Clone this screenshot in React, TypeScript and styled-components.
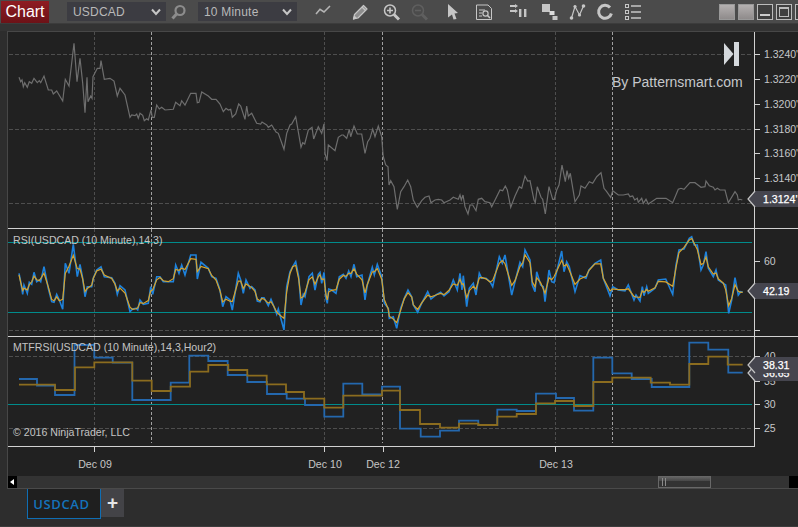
import styled, {createGlobalStyle} from 'styled-components'
import type {ReactNode} from 'react'

type Pt = [number, number]

const GlobalStyle = createGlobalStyle`
    html, body {
        margin: 0;
        padding: 0;
        background: #2d2d2d;
        overflow: hidden;
    }
`

const Page = styled.div`
    width: 798px;
    height: 527px;
    overflow: hidden;
    display: flex;
    flex-direction: column;
    background: #2d2d2d;
    font-family: "Liberation Sans", Arial, sans-serif;
`

const Toolbar = styled.div`
    height: 24px;
    flex: none;
    display: flex;
    align-items: center;
    padding-left: 1px;
    background: #4b4b4b;
    border-bottom: 1px solid #3c3c3c;
    box-sizing: border-box;
`

const Band = styled.div`
    height: 7px;
    flex: none;
    background: #333;
`

const ChartButton = styled.div`
    width: 48px;
    height: 22px;
    flex: none;
    display: flex;
    align-items: center;
    justify-content: center;
    background: linear-gradient(#8f1c22, #6d1217);
    color: #fff;
    font-size: 16px;
`

const Picker = styled.div<{$left: number}>`
    width: 99px;
    height: 19px;
    flex: none;
    margin-left: ${({$left}) => $left}px;
    padding: 0 5px 0 6px;
    box-sizing: border-box;
    display: flex;
    align-items: center;
    justify-content: space-between;
    background: #3c3c42;
    color: #b9b9b9;
    font-size: 12px;
    letter-spacing: 0.2px;
`

const Slot = styled.span<{$left: number}>`
    width: 16px;
    height: 16px;
    flex: none;
    display: block;
    margin-left: ${({$left}) => $left}px;

    svg {
        display: block;
        overflow: visible;
    }
`

const WindowButton = styled.span<{$filled?: boolean; $left?: number}>`
    width: 16px;
    height: 16px;
    flex: none;
    box-sizing: border-box;
    margin-left: ${({$left}) => $left ?? 3}px;
    display: flex;
    align-items: center;
    justify-content: center;
    border: 1px solid ${({$filled}) => ($filled ? '#999' : '#bbb')};
    background: ${({$filled}) => ($filled ? 'linear-gradient(#b4b0b0, #8f8b8b)' : '#3f3f3f')};
`

const MinimizeMark = styled.span`
    width: 10px;
    height: 2px;
    margin-top: 7px;
    background: #ccc;
`

const MaximizeMark = styled.span`
    width: 10px;
    height: 10px;
    box-sizing: border-box;
    border: 1px solid #bbb;
    border-top-width: 2px;
`

const Main = styled.div`
    margin-left: 7px;
    flex: none;
    border-left: 1px solid #474747;
    border-top: 1px solid #474747;
    background: #212121;
`

const Pane = styled.div<{$rule?: boolean}>`
    box-sizing: border-box;
    border-bottom: ${({$rule}) => ($rule ? '1px solid #d2d2d2' : 'none')};

    svg {
        display: block;
    }
`

const AxisText = styled.text`
    font-size: 10.5px;
    fill: #c6c8ca;
`

const TitleText = styled.text`
    font-size: 10.6px;
    fill: #c4c4c4;
`

const BrandText = styled.text`
    font-size: 14px;
    fill: #c6c8cc;
`

const DateText = styled.text`
    font-size: 10.6px;
    fill: #c6c6c6;
    text-anchor: middle;
`

const CalloutText = styled.text`
    font-size: 10.6px;
    fill: #fff;
    stroke: #fff;
    stroke-width: 0.25px;
`

const ScrollBar = styled.div`
    height: 13px;
    box-sizing: border-box;
    display: flex;
    align-items: stretch;
    background: #333;
    border-bottom: 1px solid #4a4a4a;
`

const ScrollEnd = styled.div`
    width: 10px;
    display: flex;
    align-items: center;
    justify-content: center;
    background: #000;
`

const ScrollArrow = styled.span`
    width: 0;
    height: 0;
    border-top: 3px solid transparent;
    border-bottom: 3px solid transparent;
    border-right: 4px solid #fff;
`

const ScrollThumb = styled.div`
    width: 60px;
    margin-left: 641px;
    box-sizing: border-box;
    padding-left: 3px;
    display: flex;
    gap: 2px;
    border: 1px solid #686868;
    border-top: none;
    background: linear-gradient(#6a6a6a, #474747 45%, #333 50%);
`

const Grip = styled.span`
    width: 1px;
    height: 8px;
    margin-top: 2px;
    background: #8a8a8a;
`

const ScrollEndRight = styled(ScrollEnd)`
    margin-left: 78px;
`

const TabBar = styled.div`
    flex: 1;
    display: flex;
    align-items: flex-start;
    padding-left: 27px;
    border-bottom: 1px solid #3c3c3c;
`

const Tab = styled.div`
    width: 74px;
    height: 30px;
    box-sizing: border-box;
    padding-right: 5px;
    display: flex;
    align-items: center;
    justify-content: center;
    background: #1f1f1f;
    border: 1px solid #0f6eb4;
    border-top: none;
    color: #1473bb;
    font-family: "Open Sans", sans-serif;
    font-size: 13px;
    font-weight: 600;
    letter-spacing: 0.6px;
`

const AddTab = styled.div`
    width: 23px;
    height: 28px;
    display: flex;
    align-items: center;
    justify-content: center;
    background: #434347;
    color: #e6e6e6;
    font-size: 19px;
    font-weight: 700;
`

const fromZoom = (raw: number[], ox: number, oy: number): Pt[] => {
    const out: Pt[] = []
    for (let i = 0; i < raw.length; i += 2) out.push([ox + raw[i] / 3, oy + raw[i + 1] / 3])
    return out
}

const toPoints = (pts: Pt[]) => pts.map(([x, y]) => `${x.toFixed(1)},${y.toFixed(1)}`).join(' ')

const smooth = (pts: Pt[]): Pt[] =>
    pts.map(([x, y], i) => {
        const prev = pts[Math.max(0, i - 1)][1]
        const next = pts[Math.min(pts.length - 1, i + 1)][1]
        return [x, prev * 0.18 + y * 0.64 + next * 0.18] as Pt
    })

const steps = (startX: number, raw: Pt[]): Pt[] => {
    const out: Pt[] = []
    let x = startX
    for (const [end, y] of raw) {
        out.push([x, y], [end, y])
        x = end
    }
    return out
}

const PRICE: Pt[] = [
    ...fromZoom([57,142,62,155,66,150,70,170,74,158,82,172,88,155,95,160,102,145,112,158,118,152,122,158,132,138,145,180,155,180,160,192,170,183,188,213,196,148,207,168,222,40,231,155,240,85,248,160,255,248,261,142,264,215,272,198,276,205,279,140,292,115,300,115,303,92,313,148,330,145,342,153,352,198,360,175,375,195,390,262,395,255,405,257,410,252,415,265,420,250,428,256,433,272,440,266,445,270,453,240,457,262,463,262,470,225,478,237,485,232,495,240,520,238,527,217,540,227,545,212,555,225,572,190,588,190,592,218,597,217,605,186,625,198,635,208,648,208,660,222,670,245,678,235,685,240,692,238,697,262,707,252,716,222,722,228,735,268,740,228,745,258,755,250,770,280,782,282,786,276,800,285,805,292,815,285,828,306,835,310,852,358,860,310,870,285,875,282,887,260,903,352,908,338,914,342,925,300,936,292,941,327,955,290,965,310,972,282,975,370,981,392,985,345,1005,362,1015,322,1025,315,1030,315,1040,325,1048,298,1052,320,1062,288,1072,312,1085,312,1095,370,1103,335,1110,325,1118,297,1125,320,1135,288,1145,320,1150,385], 0, 30),
    ...fromZoom([10,110,17,135,24,140,27,195,32,182,42,200,52,268,62,215,72,200,83,180,92,200,100,240,112,262,125,242,135,232,147,228,153,248,165,240,175,238,185,240,192,248,210,240,220,232,235,238,240,225,244,240,249,225,255,260,264,282,270,255,278,255,288,272,295,238,305,235,315,245,330,248,335,260,360,210,368,212,376,198,382,210,392,262,405,228,418,200,425,205,435,168,443,183,450,182,462,240,466,248,472,200,483,232,488,238,496,282,507,200,518,238,523,238,530,210,537,195,546,135,556,185,561,152,566,175,571,160,585,245,598,225,603,198,615,205,628,185,638,190,650,170,663,158,672,205,680,215,692,232,698,212,715,225,730,225,745,222,750,230,758,228,764,240,772,235,775,247,785,235,790,250,798,238,805,252,815,245,830,235,858,235,878,248,895,208,903,205,912,208,930,188,945,188,950,192,963,202,975,200,978,183,988,197,1000,202,1005,210,1012,205,1020,210,1035,210,1045,248,1065,215,1072,225,1075,240,1080,238,1087,240], 380, 120),
]

const RSI: Pt[] = [
    ...fromZoom([57,145,62,170,68,208,72,180,82,205,88,172,95,178,102,142,110,170,118,165,122,170,132,125,145,190,155,230,162,232,170,208,178,225,188,253,196,115,207,145,220,58,232,155,240,118,248,160,255,215,262,185,275,185,280,160,290,135,303,125,313,155,335,158,345,175,352,208,360,182,375,195,390,260,398,252,408,250,413,255,420,225,430,238,445,235,452,185,458,208,470,155,480,155,490,170,505,170,520,170,527,120,537,145,545,120,555,150,572,90,588,90,592,162,603,112,625,130,635,155,648,160,660,195,668,245,678,215,690,225,697,255,715,145,722,165,730,205,738,165], 0, 225),
    ...fromZoom([0,160,5,155,15,165,22,198,30,200,35,188,42,188,55,212,63,193,72,215,80,238,85,222,102,285,110,155,120,110,128,95,137,80,146,125,153,210,160,178,165,185,177,125,187,115,195,165,205,118,210,112,215,145,222,112,228,190,232,205,236,162,245,165,258,175,268,125,280,118,288,130,296,108,303,125,312,88,320,125,336,120,345,195,352,150,367,97,373,120,382,88,395,125,403,205,415,220,418,250,430,245,440,280,452,220,463,190,474,165,485,185,490,210,503,232,515,205,533,170,543,192,560,178,572,172,582,183,597,170,610,135,622,165,630,115,636,165,640,122,650,215,658,160,670,145,678,180,688,115,695,130,708,130,720,140,728,155,748,65,757,85,765,60], 250, 235),
    ...fromZoom([35,180,45,140,60,82,68,95,75,45,90,75,97,150,105,170,110,110,122,150,130,155,135,200,147,105,155,140,162,143,185,48,192,110,200,80,208,95,225,170,240,122,258,130,267,105,285,85,302,75,310,130,330,182,338,155,355,165,375,168,385,150,402,195,408,180,420,198,427,155,432,182,440,155,445,175,465,160,475,135,497,132,518,178,528,90,537,45,552,42,568,10,575,5,583,30,592,30,603,105,610,90,618,50,625,100,640,125,648,105,655,135,670,145,677,150,686,235,695,195,705,128,715,180,722,170,728,172], 500, 235),
]

const MTF_BLUE = steps(19, [[37,379],[55,385.7],[74.5,395],[94.3,345],[112.7,357.7],[132.3,362.7],[170.7,400],[189.3,382.7],[208.3,355.7],[227.7,361],[247.3,375],[267,382],[286.7,394],[305,398.7],[324.3,405],[343.3,416.7],[362.3,383.7],[382,394.3],[400,386.7],[420.7,428.7],[440,436.7],[459,430.7],[478.3,420.7],[497.3,425],[516.7,409.7],[536,411],[556,393.7],[574,398],[593.3,410.7],[612.3,357.7],[631.7,373.3],[651.7,379],[689.3,387],[708.3,342.7],[728.3,349.7],[742.7,372.7]])

const MTF_GOLD = steps(19, [[55,384.7],[75,390],[94.3,367.3],[132.3,362.3],[151.7,380.7],[170.7,391],[190,386.7],[208.3,371.7],[228.3,365],[247.3,370],[266.7,375.7],[286,384.3],[304,392],[324.3,398.7],[343.3,407.7],[382,395.7],[400,390.7],[420,410],[440,424],[459,427.7],[478.3,423.7],[497.3,425],[516.7,416.7],[536,414],[555,403.3],[574,401],[593.3,406],[612.3,382],[650.7,377.7],[670,382.7],[689.3,384.7],[708.3,364],[727.7,356.7],[742.7,364.7]])

const SESSION_LINES = [
    {x: 94.5, color: '#4e4e4e'},
    {x: 151.5, color: '#a0a0a0'},
    {x: 324.5, color: '#4e4e4e'},
    {x: 382.5, color: '#a0a0a0'},
    {x: 555.5, color: '#4e4e4e'},
    {x: 612.5, color: '#a0a0a0'},
]

function VerticalGrid({top, bottom}: {top: number; bottom: number}) {
    return (
        <>
            {SESSION_LINES.map((l) => (
                <line key={l.x} x1={l.x} x2={l.x} y1={top} y2={bottom} stroke={l.color} strokeDasharray="3 2"/>
            ))}
        </>
    )
}

function HorizontalGrid({ys}: {ys: number[]}) {
    return (
        <>
            {ys.map((y) => (
                <line key={y} x1={9} x2={752} y1={y + 0.5} y2={y + 0.5} stroke="#4e4e4e" strokeDasharray="4 2"/>
            ))}
        </>
    )
}

function Teal({y}: {y: number}) {
    return <line x1={8} x2={752} y1={y + 0.5} y2={y + 0.5} stroke="#008b8b" strokeWidth={1.2}/>
}

function AxisLine({top, bottom}: {top: number; bottom: number}) {
    return <line x1={754.5} x2={754.5} y1={top} y2={bottom} stroke="#d2d2d2"/>
}

function Tick({y, label, x = 764}: {y: number; label?: string; x?: number}) {
    return (
        <>
            <line x1={755} x2={760} y1={y + 0.5} y2={y + 0.5} stroke="#d2d2d2"/>
            {label && <AxisText x={x} y={y + 4}>{label}</AxisText>}
        </>
    )
}

function Callout({y, label}: {y: number; label: string}) {
    return (
        <>
            <polygon points={`748,${y} 754,${y - 8} 798,${y - 8} 798,${y + 8} 754,${y + 8}`} fill="#45454e"/>
            <polyline
                points={`755,${y - 8} 748,${y} 755,${y + 8}`}
                fill="none"
                stroke="#c4c4c4"
                strokeWidth={1.2}
            />
            <CalloutText x={763} y={y + 4}>{label}</CalloutText>
        </>
    )
}

function ChartSvg({top, height, children}: {top: number; height: number; children: ReactNode}) {
    return (
        <svg width={790} height={height} viewBox={`8 ${top} 790 ${height}`}>
            {children}
        </svg>
    )
}

const ICON = '#c6c6c6'

const icons: {left: number; node: ReactNode}[] = [
    {
        left: 18,
        node: <polyline points="1,10 5,5.3 9,8 15,2" fill="none" stroke="#b4b4b4" strokeWidth={1.6}/>,
    },
    {
        left: 21,
        node: (
            <g stroke={ICON} strokeWidth={1.2} strokeLinejoin="round">
                <path d="M1.5 15 L2.5 10.5 L11.5 1.5 L15 5 L6 14 Z" fill="#8e8e8e"/>
                <path d="M10 3 L13.5 6.5" fill="none"/>
                <path d="M1.5 15 L2.5 12.5 L4 14 Z" fill={ICON}/>
            </g>
        ),
    },
    {
        left: 15,
        node: (
            <g fill="none" stroke={ICON}>
                <circle cx={7} cy={6.5} r={5.5} strokeWidth={1.5}/>
                <path d="M11 10.5 L16 15.5" strokeWidth={3}/>
                <path d="M7 3.5 V9.5 M4 6.5 H10" strokeWidth={1.6}/>
            </g>
        ),
    },
    {
        left: 12,
        node: (
            <g fill="none" stroke="#5f5f5f">
                <circle cx={7} cy={6.5} r={5.5} strokeWidth={1.5}/>
                <path d="M11 10.5 L16 15.5" strokeWidth={3}/>
                <path d="M4 6.5 H10" strokeWidth={1.6}/>
            </g>
        ),
    },
    {
        left: 18,
        node: <path d="M3 0 L13 9 L9.5 9.5 L11.5 15 L8.5 15.5 L7 10.5 L3 13.5 Z" fill={ICON}/>,
    },
    {
        left: 15,
        node: (
            <g fill="none" stroke={ICON}>
                <path d="M0.5 1 H12 L15.5 4.5 V15.5 H0.5 Z" strokeWidth={1}/>
                <path d="M3 6 H9 M3 9 H6 M3 12 H6" strokeWidth={1}/>
                <circle cx={9.5} cy={9.5} r={2.6} strokeWidth={1.2}/>
                <path d="M11.5 11.5 L14 14" strokeWidth={1.6}/>
            </g>
        ),
    },
    {
        left: 18,
        node: (
            <g fill={ICON}>
                <path d="M0 1 H5 V0 L8 2 L5 4 V3 H0 Z"/>
                <path d="M0 6 H5 V5 L8 7 L5 9 V8 H0 Z"/>
                <rect x={9} y={5} width={2.4} height={8}/>
                <rect x={14} y={5} width={2.4} height={8}/>
            </g>
        ),
    },
    {
        left: 15,
        node: (
            <g fill={ICON}>
                <rect x={1} y={0} width={8} height={8}/>
                <rect x={8.5} y={7} width={5} height={4} fill="#dcdcdc"/>
                <rect x={11.5} y={12} width={5} height={4}/>
            </g>
        ),
    },
    {
        left: 12,
        node: (
            <g>
                <path d="M2.5 14 L6 2.5 L10.5 11 L14.5 2" fill="none" stroke={ICON} strokeWidth={1.2}/>
                <circle cx={2.5} cy={14} r={1.8} fill={ICON}/>
                <circle cx={6} cy={2.5} r={1.6} fill={ICON}/>
                <circle cx={10.5} cy={11} r={1.6} fill={ICON}/>
                <circle cx={14.5} cy={2} r={1.8} fill={ICON}/>
            </g>
        ),
    },
    {
        left: 12,
        node: (
            <path
                d="M13 3.5 A6.5 6.5 0 1 0 14.4 9.5"
                fill="none"
                stroke={ICON}
                strokeWidth={3}
            />
        ),
    },
    {
        left: 12,
        node: (
            <g fill="none" stroke={ICON}>
                <rect x={0.5} y={0.5} width={3} height={3}/>
                <rect x={0.5} y={6.5} width={3} height={3}/>
                <rect x={0.5} y={12.5} width={3} height={3}/>
                <path d="M6 2 H16 M6 8 H16 M6 14 H16" strokeWidth={1.4}/>
            </g>
        ),
    },
]

function Chevron() {
    return (
        <svg width={10} height={8} viewBox="0 0 10 8">
            <polyline points="1,1.5 5,6 9,1.5" fill="none" stroke="#c6c6c6" strokeWidth={2}/>
        </svg>
    )
}

function SearchIcon() {
    return (
        <svg width={16} height={16} viewBox="0 0 16 16">
            <circle cx={9} cy={6.5} r={4.5} fill="none" stroke="#8c8c8c" strokeWidth={2.2}/>
            <path d="M5.5 10 L1.5 14.5" stroke="#8c8c8c" strokeWidth={3}/>
        </svg>
    )
}

export default function App() {
    const goldRsi = smooth(RSI)
    return (
        <Page>
            <GlobalStyle/>
            <Toolbar>
                <ChartButton>Chart</ChartButton>
                <Picker $left={18}>USDCAD<Chevron/></Picker>
                <Slot $left={5}><SearchIcon/></Slot>
                <Picker $left={11}>10 Minute<Chevron/></Picker>
                {icons.map((icon, i) => (
                    <Slot key={i} $left={icon.left}>
                        <svg width={16} height={16} viewBox="0 0 16 16">{icon.node}</svg>
                    </Slot>
                ))}
                <WindowButton $filled $left={78}/>
                <WindowButton $filled/>
                <WindowButton><MinimizeMark/></WindowButton>
                <WindowButton><MaximizeMark/></WindowButton>
                <WindowButton/>
            </Toolbar>
            <Band/>
            <Main>
                <Pane $rule>
                    <ChartSvg top={32} height={196}>
                        <VerticalGrid top={32} bottom={228}/>
                        <HorizontalGrid ys={[54, 129, 203]}/>
                        <AxisLine top={32} bottom={228}/>
                        <polyline points={toPoints(PRICE)} fill="none" stroke="#6e6e6e" strokeWidth={1.2}/>
                        <path d="M724 43 L733.5 54 L724 65 Z" fill="#d4d8dc"/>
                        <rect x={734} y={42} width={5} height={24} fill="#d4d8dc"/>
                        <BrandText x={612} y={87}>By Patternsmart.com</BrandText>
                        <Tick y={54} label="1.3240'"/>
                        <Tick y={79} label="1.3220'"/>
                        <Tick y={104} label="1.3200'"/>
                        <Tick y={129} label="1.3180'"/>
                        <Tick y={153} label="1.3160'"/>
                        <Tick y={178} label="1.3140'"/>
                        <Tick y={203}/>
                        <Callout y={199} label="1.3124'"/>
                    </ChartSvg>
                </Pane>
                <Pane $rule>
                    <ChartSvg top={229} height={107}>
                        <VerticalGrid top={229} bottom={336}/>
                        <HorizontalGrid ys={[330]}/>
                        <Teal y={242}/>
                        <Teal y={312}/>
                        <AxisLine top={229} bottom={336}/>
                        <polyline points={toPoints(RSI)} fill="none" stroke="#1e82dc" strokeWidth={1.6}/>
                        <polyline points={toPoints(goldRsi)} fill="none" stroke="#d8a32a" strokeWidth={1.2}/>
                        <TitleText x={13} y={244}>RSI(USDCAD (10 Minute),14,3)</TitleText>
                        <Tick y={261} label="60"/>
                        <Tick y={330}/>
                        <Callout y={291} label="42.19"/>
                    </ChartSvg>
                </Pane>
                <Pane>
                    <ChartSvg top={337} height={110}>
                        <VerticalGrid top={337} bottom={443}/>
                        <HorizontalGrid ys={[356, 428]}/>
                        <Teal y={404}/>
                        <AxisLine top={337} bottom={447}/>
                        <line x1={8} x2={755} y1={446.5} y2={446.5} stroke="#d2d2d2"/>
                        <polyline points={toPoints(MTF_BLUE)} fill="none" stroke="#2468ae" strokeWidth={1.8}/>
                        <polyline points={toPoints(MTF_GOLD)} fill="none" stroke="#8b6c1f" strokeWidth={1.8}/>
                        <TitleText x={13} y={351}>MTFRSI(USDCAD (10 Minute),14,3,Hour2)</TitleText>
                        <TitleText x={13} y={436}>© 2016 NinjaTrader, LLC</TitleText>
                        <Tick y={356} label="40"/>
                        <Tick y={381} label="35"/>
                        <Tick y={404} label="30"/>
                        <Tick y={428} label="25"/>
                        <Callout y={373} label="36.65"/>
                        <Callout y={365} label="38.31"/>
                    </ChartSvg>
                </Pane>
                <Pane>
                    <ChartSvg top={447} height={29}>
                        <line x1={94.5} x2={94.5} y1={447} y2={452} stroke="#d2d2d2"/>
                        <line x1={324.5} x2={324.5} y1={447} y2={452} stroke="#d2d2d2"/>
                        <line x1={383.5} x2={383.5} y1={447} y2={452} stroke="#d2d2d2"/>
                        <line x1={555.5} x2={555.5} y1={447} y2={452} stroke="#d2d2d2"/>
                        <DateText x={95} y={468}>Dec 09</DateText>
                        <DateText x={325} y={468}>Dec 10</DateText>
                        <DateText x={383} y={468}>Dec 12</DateText>
                        <DateText x={556} y={468}>Dec 13</DateText>
                    </ChartSvg>
                </Pane>
                <ScrollBar>
                    <ScrollEnd><ScrollArrow/></ScrollEnd>
                    <ScrollThumb><Grip/><Grip/></ScrollThumb>
                    <ScrollEndRight/>
                </ScrollBar>
            </Main>
            <TabBar>
                <Tab>USDCAD</Tab>
                <AddTab>+</AddTab>
            </TabBar>
        </Page>
    )
}
